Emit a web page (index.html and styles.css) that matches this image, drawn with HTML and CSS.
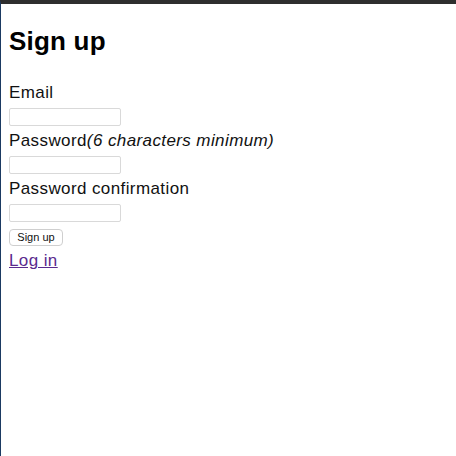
FILE: index.html
```html
<!DOCTYPE html>
<html lang="en">
<head>
<meta charset="utf-8">
<title>Sign up</title>
<link rel="stylesheet" href="styles.css">
</head>
<body>
<div class="frame">
  <div class="page">
    <h1 class="title">Sign up</h1>
    <form class="form" onsubmit="return false">
      <div class="field">
        <label class="label" for="email">Email</label>
        <div class="control"><input class="input" id="email" type="email"></div>
      </div>
      <div class="field">
        <label class="label" for="password">Password<em class="hint">(6 characters minimum)</em></label>
        <div class="control"><input class="input" id="password" type="password"></div>
      </div>
      <div class="field">
        <label class="label" for="confirm">Password confirmation</label>
        <div class="control"><input class="input" id="confirm" type="password"></div>
      </div>
      <div class="actions">
        <button class="button" type="submit">Sign up</button>
      </div>
    </form>
    <a class="link" href="#">Log in</a>
  </div>
</div>
</body>
</html>
```

FILE: styles.css
```css
html, body {
  margin: 0;
  padding: 0;
  height: 100%;
  background: #ffffff;
}

.frame {
  box-sizing: border-box;
  min-height: 100%;
  border-top: 4px solid #2e2e2e;
  border-left: 1px solid #1b3a62;
  font-family: "Liberation Sans", Arial, sans-serif;
  color: #111111;
}

.page {
  padding: 0 8px;
}

.title {
  margin: 0;
  padding: 22px 0 25px;
  font-size: 26px;
  line-height: 30px;
  font-weight: bold;
  color: #000;
  letter-spacing: 0.2px;
}

.form {
  margin: 0;
}

.label {
  display: block;
  font-size: 17px;
  line-height: 24px;
  letter-spacing: 0.4px;
}

.hint {
  font-style: italic;
}

.control {
  box-sizing: border-box;
  height: 24px;
  padding-top: 3px;
}

.input {
  display: block;
  box-sizing: border-box;
  width: 112px;
  height: 18px;
  margin: 0;
  padding: 0 3px;
  border: 1px solid #d9d9d9;
  border-radius: 2px;
  background: #fff;
}

.actions {
  box-sizing: border-box;
  height: 24px;
  padding-top: 4px;
}

.button {
  display: block;
  box-sizing: border-box;
  width: 54px;
  height: 17px;
  margin: 0;
  padding: 0;
  border: 1px solid #cfcfcf;
  border-radius: 4px;
  background: #fff;
  font-family: "Liberation Sans", Arial, sans-serif;
  font-size: 11px;
  line-height: 15px;
  color: #111;
}

.link {
  display: inline-block;
  font-size: 17px;
  line-height: 24px;
  color: #5a2a8e;
  text-decoration: underline;
  letter-spacing: 0.4px;
}
```
